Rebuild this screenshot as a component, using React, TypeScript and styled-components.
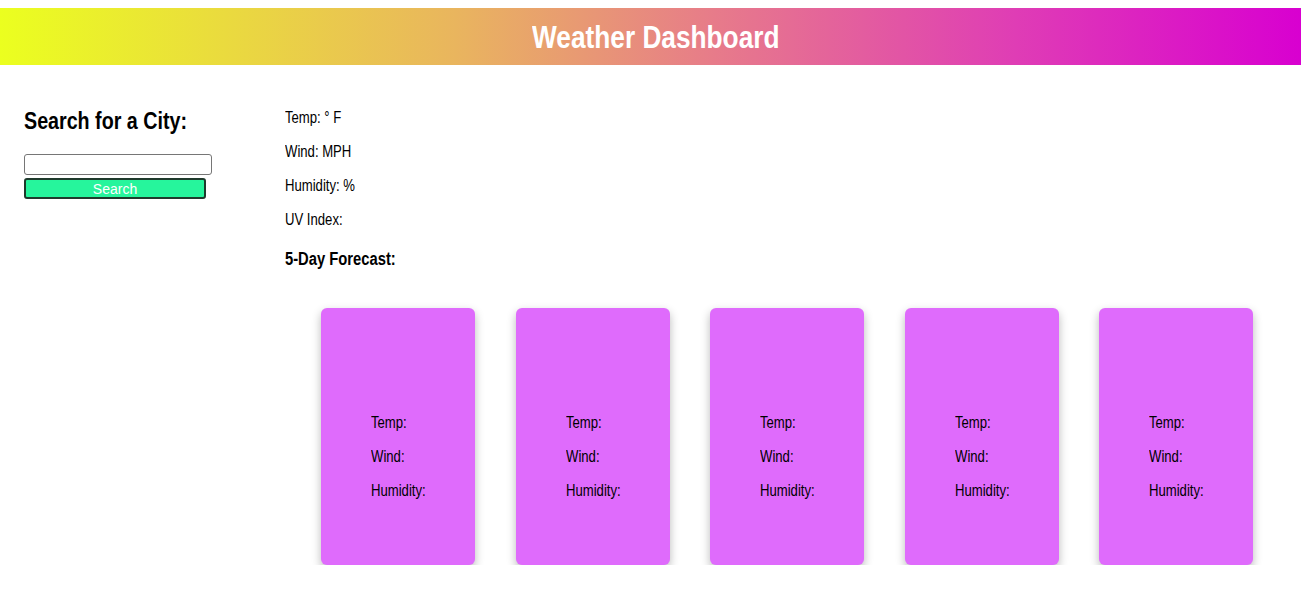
import React from 'react';
import styled, { createGlobalStyle, css } from 'styled-components';

const GlobalStyle = createGlobalStyle`
  body {
    margin: 0;
    padding-top: 8px;
    font-family: "Liberation Sans", Arial, sans-serif;
    color: #000;
    background: #fff;
  }
`;

// reference uses a narrow face (Arial Narrow); squeeze Liberation Sans to match
const narrow = css`
  transform: scaleX(0.82);
  transform-origin: left center;
`;

const Header = styled.header`
  height: 57px;
  display: flex;
  align-items: center;
  justify-content: center;
  background: linear-gradient(to right, #ebff1f 0%, #e9b55e 35%, #e77b8a 55%, #df3db5 78%, #d800d0 100%);
`;

const Title = styled.h1`
  margin: 2px 0 0;
  font-size: 32px;
  font-weight: bold;
  color: #fff;
  padding-left: 12px;
  transform: scaleX(0.82);
`;

const Main = styled.main`
  display: flex;
  padding-top: 40px;
`;

const Sidebar = styled.aside`
  width: 261px;
  padding-left: 24px;
`;

const SideTitle = styled.h2`
  margin: 2px 0 19px;
  font-size: 24px;
  font-weight: bold;
  ${narrow}
`;

const SearchForm = styled.form`
  display: flex;
  flex-direction: column;
  align-items: flex-start;
  gap: 3px;
`;

const CityInput = styled.input`
  box-sizing: border-box;
  width: 188px;
  height: 21px;
  border: 1px solid #767676;
  border-radius: 3px;
  padding: 0 4px;
`;

const SearchButton = styled.button`
  box-sizing: border-box;
  width: 182px;
  height: 21px;
  background: #26f59c;
  border: 2px solid #1e3a2c;
  border-radius: 3px;
  color: #fff;
  font-family: "Liberation Sans", Arial, sans-serif;
  font-size: 14px;
  line-height: 1;
  padding: 0;
`;

const Content = styled.section`
  flex: 1;
  padding-top: 3px;
`;

const Stat = styled.p`
  margin: 0 0 15px;
  font-size: 16px;
  line-height: 19px;
  ${narrow}
`;

const ForecastTitle = styled.h3`
  margin: 20px 0 0;
  font-size: 18px;
  font-weight: bold;
  line-height: 21px;
  ${narrow}
`;

const Cards = styled.div`
  display: flex;
  gap: 40.5px;
  padding-left: 36px;
  margin-top: 38px;
`;

const Card = styled.div`
  box-sizing: border-box;
  width: 154px;
  height: 257px;
  background: #df6bfc;
  border-radius: 6px;
  box-shadow: 0 4px 10px rgba(0, 0, 0, 0.28);
  padding: 105px 0 0 50px;
`;

const CardLine = styled.p`
  margin: 0 0 15px;
  font-size: 16px;
  line-height: 19px;
  ${narrow}
`;

const days = [1, 2, 3, 4, 5];

export default function App() {
  return (
    <>
      <GlobalStyle />
      <Header>
        <Title>Weather Dashboard</Title>
      </Header>
      <Main>
        <Sidebar>
          <SideTitle>Search for a City:</SideTitle>
          <SearchForm onSubmit={(e) => e.preventDefault()}>
            <CityInput type="text" />
            <SearchButton type="submit">Search</SearchButton>
          </SearchForm>
        </Sidebar>
        <Content>
          <Stat>Temp: ° F</Stat>
          <Stat>Wind: MPH</Stat>
          <Stat>Humidity: %</Stat>
          <Stat>UV Index:</Stat>
          <ForecastTitle>5-Day Forecast:</ForecastTitle>
          <Cards>
            {days.map((d) => (
              <Card key={d}>
                <CardLine>Temp:</CardLine>
                <CardLine>Wind:</CardLine>
                <CardLine>Humidity:</CardLine>
              </Card>
            ))}
          </Cards>
        </Content>
      </Main>
    </>
  );
}
